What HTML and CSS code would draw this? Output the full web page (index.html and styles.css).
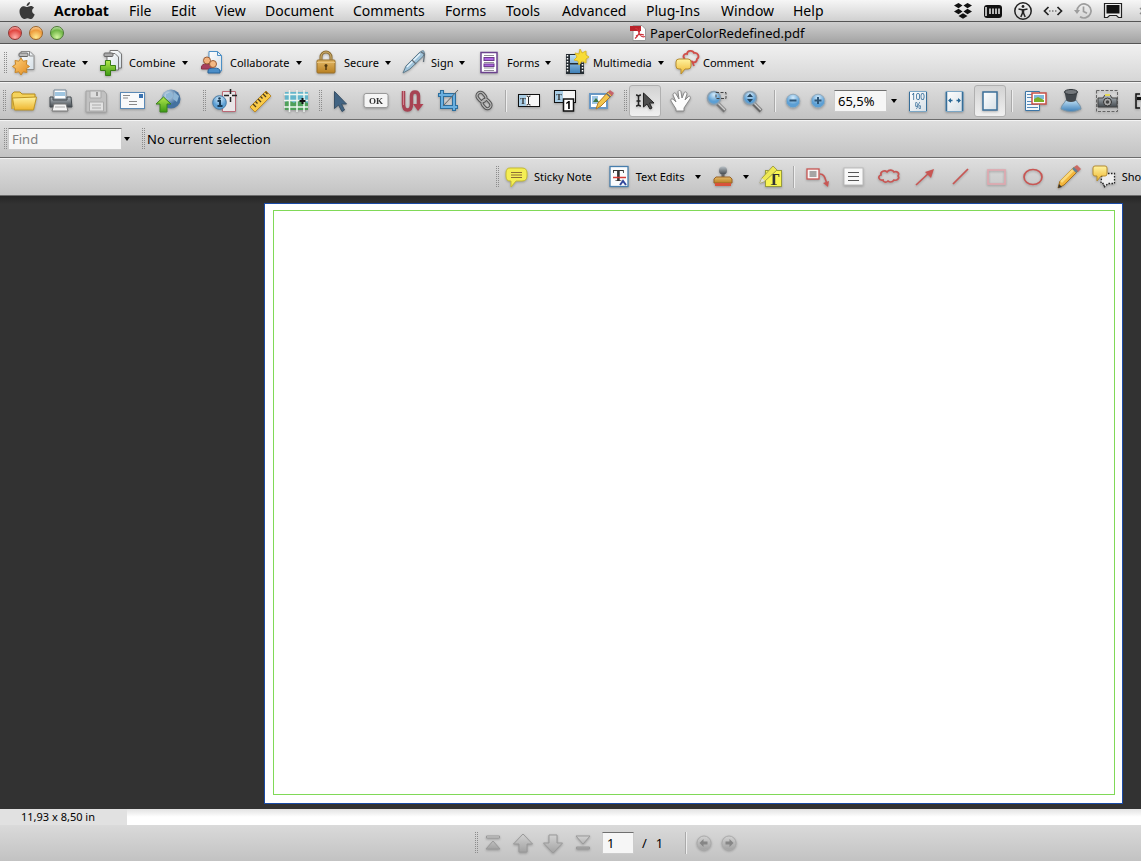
FILE: index.html
```html
<!DOCTYPE html>
<html lang="en">
<head>
<meta charset="utf-8">
<title>PaperColorRedefined.pdf</title>
<link rel="stylesheet" href="styles.css">
</head>
<body>
<svg class="defs" aria-hidden="true">
  <defs>
    <linearGradient id="gold" x2="0" y2="1"><stop offset="0" stop-color="#fff3a0"/><stop offset="1" stop-color="#eeb52e"/></linearGradient>
    <linearGradient id="orange" x2="1" y2="1"><stop offset="0" stop-color="#ffd37e"/><stop offset="1" stop-color="#e2891c"/></linearGradient>
    <linearGradient id="brass" x2="0" y2="1"><stop offset="0" stop-color="#e3b866"/><stop offset="1" stop-color="#b98022"/></linearGradient>
    <linearGradient id="green" x2="0" y2="1"><stop offset="0" stop-color="#b5ea4c"/><stop offset="1" stop-color="#3c9a14"/></linearGradient>
    <linearGradient id="blue" x2="0" y2="1"><stop offset="0" stop-color="#bfe0f5"/><stop offset="1" stop-color="#3f80b8"/></linearGradient>
    <linearGradient id="paper" x2="1" y2="1"><stop offset="0" stop-color="#ffffff"/><stop offset="1" stop-color="#d5dfe6"/></linearGradient>
    <linearGradient id="steel" x2="0" y2="1"><stop offset="0" stop-color="#b9c1c7"/><stop offset="1" stop-color="#42484d"/></linearGradient>
    <linearGradient id="grey" x2="0" y2="1"><stop offset="0" stop-color="#d2d2d2"/><stop offset="1" stop-color="#a2a2a2"/></linearGradient>
    <radialGradient id="globe" cx=".35" cy=".3"><stop offset="0" stop-color="#dcebf6"/><stop offset="1" stop-color="#44719f"/></radialGradient>
    <radialGradient id="ball" cx=".5" cy=".25"><stop offset="0" stop-color="#d4ebfb"/><stop offset="1" stop-color="#5c9fd4"/></radialGradient>
  </defs>
</svg>

<nav class="menubar" aria-label="Menu bar">
  <svg class="apple" width="16" height="18" viewBox="0 0 16 18"><path d="M11 0c.1 2-1.500 4-3.400 4C7.400 2.200 9 .4 11 0zM8.300 5c.8 0 1.900-.9 3.500-.9 1.300 0 2.500.7 3.200 1.700-2.800 1.700-2.300 5.500.7 6.600-.7 2-2.200 4.600-3.800 4.600-1.400 0-1.700-.8-3.400-.8s-2.200.8-3.400.8C3.300 17 .5 13.300.5 9.500.5 6.200 2.500 4.200 5 4.200c1.500 0 2.400.8 3.300.8z" fill="#3a3a3a"/></svg>
  <button class="menu app">Acrobat</button>
  <button class="menu">File</button>
  <button class="menu">Edit</button>
  <button class="menu">View</button>
  <button class="menu">Document</button>
  <button class="menu">Comments</button>
  <button class="menu">Forms</button>
  <button class="menu">Tools</button>
  <button class="menu">Advanced</button>
  <button class="menu">Plug-Ins</button>
  <button class="menu">Window</button>
  <button class="menu">Help</button>
  <div class="extras">
    <svg width="20" height="20" viewBox="0 0 20 20" fill="#111"><path d="M5.500 2l4 2.500-4 2.800-4.500-2.800zM14.500 2l4.500 2.500-4.500 2.800-4-2.800zM5.500 7.700l4 2.800-4 2.700L1 10.500zM14.500 7.700l4.500 2.800-4.500 2.700-4-2.700zM10 12.200l4.500 2.700-4.500 2.800-4.500-2.800z"/></svg>
    <svg width="20" height="20" viewBox="0 0 20 20"><rect x="1" y="4" width="18" height="13" rx="3" fill="#111"/><path d="M3 6v9M7 7.500v5.500M10 7.500v5.500M13 7.500v5.500M16 7.500v5.500" stroke="#e0e0e0" stroke-width="1.600"/></svg>
    <svg width="20" height="20" viewBox="0 0 20 20"><circle cx="10" cy="10" r="8.200" fill="none" stroke="#222" stroke-width="1.500"/><circle cx="10" cy="5.500" r="1.400" fill="#222"/><path d="M5.500 8l3.500.8h2l3.500-.8M9.500 9v3l-1.700 4M10.500 9v3l1.700 4M10 8.500v4" fill="none" stroke="#222" stroke-width="1.500"/></svg>
    <svg width="20" height="20" viewBox="0 0 20 20" fill="none" stroke="#222" stroke-width="1.700"><path d="M5.500 6l-4 4 4 4M14.500 6l4 4-4 4"/><path d="M6 10h8" stroke-dasharray="1.500 1.500" stroke="#777"/></svg>
    <svg width="20" height="20" viewBox="0 0 20 20" fill="none" stroke="#9d9d9d" stroke-width="1.700"><path d="M4 10a7 7 0 1 1 3 5.700M10.500 5.500v5l3.500 1.700"/><path d="M1 9h6l-3 4z" fill="#9d9d9d" stroke="none"/></svg>
    <svg width="20" height="20" viewBox="0 0 20 20"><path d="M1.500 2.500h17v14h-3l-2-2h-7l-2 2h-3z" fill="#eee" stroke="#222" stroke-width="1.200"/><path d="M3.500 4h13v8.500h-13z" fill="#111"/></svg>
    <svg width="20" height="20" viewBox="0 0 20 20"><path d="M7 7l6 6M13 7l-6 6" stroke="#888" stroke-width="1.500"/></svg>
  </div>
</nav>

<header class="titlebar">
  <div class="lights">
    <button class="light red" aria-label="Close"></button>
    <button class="light amber" aria-label="Minimize"></button>
    <button class="light lime" aria-label="Zoom"></button>
  </div>
  <h1 class="title">
    <svg width="16" height="16" viewBox="0 0 16 16"><path d="M3 .5h9l3.500 3.500v11.500H3z" fill="#fff" stroke="#999"/><path d="M0 1h11v5H0z" fill="#b8232a"/><path d="M5 3.500c4-1 3 4 5 6.500s3.500 2 5 1.500M10 3c0 5-2 8-5 10.500M6 11c3-2 5-2 8-1" fill="none" stroke="#cc3038" stroke-width="1.200"/></svg>
    PaperColorRedefined.pdf
  </h1>
</header>

<div class="bar tasks">
  <span class="grip"></span>
  <button class="task"><svg class="ic" viewBox="0 0 28 28"><path d="M9 2.500h9l4 4v14H9z" fill="url(#paper)" stroke="#8b8b8b"/><path d="M17.500 3v4h4" fill="none" stroke="#8b8b8b"/><rect x="7" y="4" width="9" height="3.500" rx="1" fill="#bbb" stroke="#666"/><path d="M9 9l2.200 3.200 3.800-.7-.7 3.800 3.200 2.200-3.200 2.200.7 3.800-3.800-.7L9 26l-2.200-3.200-3.800.7.700-3.800-3.200-2.200 3.200-2.200-.7-3.800 3.800.7z" fill="url(#orange)" stroke="#c68629"/></svg>Create<i class="caret"></i></button>
  <button class="task"><svg class="ic" viewBox="0 0 28 28"><path d="M11 1.500h8l3.500 3.500v14H11z" fill="url(#paper)" stroke="#777"/><path d="M8 4.500h8l3.500 3.500v13H8z" fill="url(#paper)" stroke="#777"/><rect x="5" y="4" width="9" height="3.500" rx="1" fill="#aaa" stroke="#666"/><path d="M6.500 11.500h5v5h5v5h-5v5h-5v-5h-5v-5h5z" fill="url(#green)" stroke="#397d14"/></svg>Combine<i class="caret"></i></button>
  <button class="task"><svg class="ic" viewBox="0 0 28 28"><path d="M9 2.500h8.500l4 4V22H9z" fill="url(#paper)" stroke="#4c8fc5"/><path d="M17.500 2.500v4h4" fill="none" stroke="#4c8fc5"/><path d="M1.500 20v-2q0-3 5.500-3t5 3v2z" fill="#a73f5e" stroke="#8c3049"/><circle cx="7" cy="11.500" r="3.500" fill="#f2b27d" stroke="#9b5c34"/><path d="M8 24v-2q0-3 6-3t6 3v2z" fill="#4b8ec8" stroke="#296398"/><circle cx="13" cy="15" r="3.500" fill="#f4b984" stroke="#9b5c34"/></svg>Collaborate<i class="caret"></i></button>
  <button class="task"><svg class="ic" viewBox="0 0 28 28"><path d="M7 12V8a5 5 0 0 1 10 0v4" fill="none" stroke="#8b6c33" stroke-width="3"/><path d="M7 12V8a5 5 0 0 1 10 0v4" fill="none" stroke="#d5b56f"/><rect x="3" y="11" width="18" height="13" rx="1" fill="url(#brass)" stroke="#99702b"/><path d="M3 13.500h18" stroke="#e9c47c"/><circle cx="12" cy="16.500" r="1.500" fill="#513910"/><path d="M12 16v5" stroke="#513910" stroke-width="1.500"/></svg>Secure<i class="caret"></i></button>
  <button class="task"><svg class="ic" viewBox="0 0 28 28"><path d="M2 24l3-7L18 4q4-3.500 5-1.500t-1 5L9 20z" fill="#9fc3da" stroke="#5f7c8d"/><path d="M6 18L19 5" stroke="#e7f5fd" stroke-width="1.500"/><path d="M11 11l4 4M20 3l3.500 2-1 8" fill="none" stroke="#64707a" stroke-width="1.300"/></svg>Sign<i class="caret"></i></button>
  <button class="task"><svg class="ic" viewBox="0 0 28 28"><rect x="4" y="3.500" width="16" height="20" fill="#fff" stroke="#6b428e" stroke-width="1.500"/><path d="M7 6.500h10M7 13.500h10M7 19h10M7 21.500h10" stroke="#938d99"/><rect x="7" y="8.500" width="10" height="3" fill="#ad66df" stroke="#6d3a8d"/><rect x="7" y="15" width="10" height="2.500" fill="#ad66df" stroke="#6d3a8d"/></svg>Forms<i class="caret"></i></button>
  <button class="task"><svg class="ic" viewBox="0 0 28 28"><rect x="3" y="5" width="18" height="20" fill="#252c32"/><path d="M4.500 6v18M19.500 6v18" stroke="#fff" stroke-width="1.500" stroke-dasharray="1.500 1.500"/><path d="M7 6h10v8H7zM7 15.500h10v8.500H7z" fill="url(#blue)"/><path d="M17 0l2 4 4-2v4l3 2-3 2v4l-4-2-3 4-1-4-4-1 3-3-2-4 4 1z" fill="#f8dc37" stroke="#d9b92a"/></svg>Multimedia<i class="caret"></i></button>
  <button class="task"><svg class="ic" viewBox="0 0 28 28"><path d="M12 10c-3-2-1-6 2-5 0-4 6-4 7-1 4-1 6 4 3 6 0 4-4 4-6 2M19 12l2 5" fill="none" stroke="#d04e49" stroke-width="1.800"/><path d="M6 10h9a3 3 0 0 1 3 3v4a3 3 0 0 1-3 3h-3l-4 5v-5H6a3 3 0 0 1-3-3v-4a3 3 0 0 1 3-3z" fill="url(#gold)" stroke="#b78d31"/></svg>Comment<i class="caret"></i></button>
</div>

<div class="bar tools">
  <span class="grip"></span>
  <div class="set">
    <button class="tool" aria-label="Open"><svg class="ic" viewBox="0 0 28 28"><path d="M2 22V7l2-2h6l2 2h13v5" fill="#f5d35b" stroke="#b58b1d"/><path d="M4.500 23L2.500 11l24-1-3 13z" fill="url(#gold)" stroke="#bd9425"/></svg></button>
    <button class="tool" aria-label="Print"><svg class="ic" viewBox="0 0 28 28"><path d="M8 3h12v9H8z" fill="#fff" stroke="#789"/><path d="M9 5h10v4H9z" fill="#9fc5e0"/><path d="M4 10h3v3h14v-3h4l1 10H4z" fill="url(#steel)" stroke="#444b50"/><path d="M8 17h12l2 7H6z" fill="#f4f4f4" stroke="#777"/><path d="M9 20h10" stroke="#aaa"/></svg></button>
    <button class="tool" aria-label="Save" disabled><svg class="ic" viewBox="0 0 28 28"><path d="M4 4h18l2.500 3v18H4z" fill="#c1c1c1" stroke="#a4a4a4"/><path d="M8 4h11v7H8z" fill="#dedede" stroke="#a9a9a9"/><path d="M15 5v4" stroke="#999" stroke-width="2"/><path d="M7.500 15h14v9h-14z" fill="#e2e2e2" stroke="#aaa"/><path d="M10 18h9M10 21h9" stroke="#aaa"/></svg></button>
    <button class="tool" aria-label="Email"><svg class="ic" viewBox="0 0 28 28"><rect x="2.500" y="5.500" width="24" height="16" fill="#f8f9fa" stroke="#5b89b5"/><rect x="21" y="7" width="4" height="4" fill="#3972b0"/><path d="M5 8.500h7M5 11h5M11 14.500h8M11 17.500h8" stroke="#888"/></svg></button>
    <button class="tool" aria-label="Upload"><svg class="ic" viewBox="0 0 28 28"><circle cx="17" cy="12" r="9.500" fill="url(#globe)"/><path d="M12 7l5-2 2 4-3 3-4-1zM20 5l5 4-2 6-4-3z" fill="#8eb6d5"/><path d="M9.500 10l7.500 7h-4v8H6v-8H2z" fill="url(#green)" stroke="#38811a"/></svg></button>
  </div>
  <span class="grip wide"></span>
  <div class="set">
    <button class="tool" aria-label="Object data"><svg class="ic" viewBox="0 0 28 28"><path d="M12.500 4.500h13v20h-13z" fill="#e8e5e7" stroke="#ba6875"/><path d="M20.500 2v5M20.500 10v5M14 8.500h5M22 8.500h5" stroke="#222" stroke-width="1.500"/><circle cx="9.500" cy="15.500" r="6.800" fill="url(#ball)" stroke="#487aa3"/><path d="M7.500 14H10v5M7.500 19h5" fill="none" stroke="#193b58" stroke-width="2"/><circle cx="9.500" cy="11.500" r="1.300" fill="#193b58"/></svg></button>
    <button class="tool" aria-label="Measure"><svg class="ic" viewBox="0 0 28 28"><path d="M4 20L20 4l5 5L9 25z" fill="#f9ca48" stroke="#bd8b29"/><path d="M7 17l3 3M9.500 14.500l2 2M12 12l3 3M14.500 9.500l2 2M17 7l3 3M19.500 5l2 2" stroke="#4c3b1b" stroke-width="1.300"/></svg></button>
    <button class="tool" aria-label="Geospatial"><svg class="ic" viewBox="0 0 28 28"><path d="M3 5h23v11H3z" fill="#64b6cb"/><path d="M3 15l4-2 5 3 4-3 10 3v7H3z" fill="#4fa05a"/><path d="M7.500 3v22M15 3v22M22 3v22M2 7.500h24M2 13.500h24M2 20h24" stroke="#edf5ef" stroke-width="1.500"/><path d="M20.500 11v6M17.500 14h6" stroke="#111" stroke-width="2"/></svg></button>
  </div>
  <span class="grip"></span>
  <div class="set">
    <button class="tool" aria-label="Select object"><svg class="ic" viewBox="0 0 28 28"><path d="M8.500 4.500v17l4-3.500 3.500 6.500 2.500-1.500-3-6h5z" fill="#426483" stroke="#385066"/></svg></button>
    <button class="tool" aria-label="Button tool"><svg class="ic" viewBox="0 0 28 28"><rect x="2" y="6.500" width="24" height="14" rx="2" fill="#f5f5f5" stroke="#999"/><text class="glyph ok" x="14" y="17">OK</text></svg></button>
    <button class="tool" aria-label="Article"><svg class="ic" viewBox="0 0 28 28"><path d="M5.500 4v13q0 6 4 6t4-6V9q0-4 3.500-4t3.500 4v9" fill="none" stroke="#a74353" stroke-width="3.500"/><path d="M5.500 4v14" stroke="#d18490"/><path d="M15 17h10.500l-5.500 7z" fill="#ae4151"/></svg></button>
    <button class="tool" aria-label="Crop"><svg class="ic" viewBox="0 0 28 28"><path d="M8 3v17h16M4 8h16v16" fill="none" stroke="#2d6e9d" stroke-width="4"/><path d="M8 4v16h15M5 8h15v15" fill="none" stroke="#69afe0" stroke-width="2"/><path d="M9 19L24 3" stroke="#666"/></svg></button>
    <button class="tool" aria-label="Link"><svg class="ic" viewBox="0 0 28 28" fill="none"><g stroke="#555" stroke-width="3.200"><rect x="8" y="5" width="7" height="10" rx="3.500" transform="rotate(-40 11.500 10)"/><rect x="13" y="12" width="7" height="10" rx="3.500" transform="rotate(-40 16.500 17)"/></g><g stroke="#b8b8b8" stroke-width="1.300"><rect x="8" y="5" width="7" height="10" rx="3.500" transform="rotate(-40 11.500 10)"/><rect x="13" y="12" width="7" height="10" rx="3.500" transform="rotate(-40 16.500 17)"/></g></svg></button>
  </div>
  <span class="rule"></span>
  <div class="set">
    <button class="tool" aria-label="Text field"><svg class="ic" viewBox="0 0 28 28"><rect x="3.500" y="7.500" width="21" height="12" fill="#f6f6f6" stroke="#111"/><path d="M4 8h7v11H4z" fill="#a9cde5"/><text class="glyph tee" x="8" y="17">T</text><path d="M11.500 9q2 0 2 1.500v6q0 1.500-2 1.500M15.500 9q-2 0-2 1.500v6q0 1.500 2 1.500" fill="none" stroke="#222"/></svg></button>
    <button class="tool" aria-label="Tab order"><svg class="ic" viewBox="0 0 28 28"><rect x="3.500" y="3.500" width="21" height="12" fill="#f6f6f6" stroke="#111"/><path d="M4 4h8v11H4z" fill="#a9cde5"/><text class="glyph tee" x="8" y="13">T</text><rect x="12.500" y="12" width="10" height="12" fill="#fff" stroke="#111" stroke-width="1.500"/><text class="glyph one" x="17.500" y="22">1</text></svg></button>
    <button class="tool" aria-label="Form wizard"><svg class="ic" viewBox="0 0 28 28"><rect x="3" y="7" width="17" height="14" fill="#fff" stroke="#6a98c4" stroke-width="2"/><rect x="5" y="9" width="6" height="8" fill="#9fc6e5"/><path d="M6 15l3-4 3 4z" fill="#3a7744"/><path d="M9 22l2-6L21 5l4 3-11 11z" fill="#f3c54c" stroke="#b17b25"/><path d="M21 5l2-2 4 3-2 3z" fill="#c6646b"/><path d="M19.500 6.500l4 3.500" stroke="#667" stroke-width="1.500"/></svg></button>
  </div>
  <span class="grip"></span>
  <div class="set">
    <button class="tool on" aria-label="Select" aria-pressed="true"><svg class="ic" viewBox="0 0 28 28"><path d="M5 8q2.500 0 2.500 2v7q0 2-2.500 2M10 8q-2.500 0-2.500 2v7q0 2 2.500 2M5.500 14h4" fill="none" stroke="#222" stroke-width="1.400"/><path d="M12.500 6v14l3.500-3 3 5 2-1-2.500-5h4.500z" fill="#4d4d4d" stroke="#222"/></svg></button>
    <button class="tool" aria-label="Hand"><svg class="ic" viewBox="0 0 28 28"><path d="M9 22l-5-8c-1-2 1-3 3-1l2 2-3-7c0-2 2-3 3-1l3 5-1-7c0-2 3-2 3 0l1 6 2-5c1-2 3-1 3 1l-2 6 3-3c2-2 3 0 2 2l-6 9v3H9z" fill="#fcfcfc" stroke="#888"/></svg></button>
    <button class="tool" aria-label="Marquee zoom"><svg class="ic" viewBox="0 0 28 28"><path d="M14 16l8 8" stroke="#777" stroke-width="4"/><path d="M15 16l7 7" stroke="#ccc" stroke-width="1.500"/><circle cx="11" cy="11" r="6.500" fill="url(#ball)" stroke="#8b9faf" stroke-width="1.500"/><path d="M13 5.500h10v6H13z" fill="none" stroke="#444" stroke-dasharray="3 1.500"/></svg></button>
    <button class="tool" aria-label="Dynamic zoom"><svg class="ic" viewBox="0 0 28 28"><path d="M14 16l8 8" stroke="#666" stroke-width="4"/><path d="M15 16l7 7" stroke="#ccc" stroke-width="1.500"/><circle cx="11" cy="11" r="6.500" fill="url(#ball)" stroke="#8b9faf" stroke-width="1.500"/><path d="M8 10l3-3.500 3 3.500zM8 12h6l-3 3.500z" fill="#23445f"/></svg></button>
  </div>
  <span class="rule"></span>
  <div class="set">
    <button class="tool small" aria-label="Zoom out"><svg class="ic" viewBox="0 0 28 28"><circle cx="14" cy="14" r="6.800" fill="url(#ball)" stroke="#92a9ba"/><path d="M10.500 13.500h7" stroke="#2d5577" stroke-width="2"/></svg></button>
    <button class="tool small" aria-label="Zoom in"><svg class="ic" viewBox="0 0 28 28"><circle cx="14" cy="14" r="6.800" fill="url(#ball)" stroke="#92a9ba"/><path d="M10.500 13.500h7M14 10v7" stroke="#2d5577" stroke-width="2"/></svg></button>
  </div>
  <input class="field zoom" aria-label="Zoom level" value="65,5%">
  <button class="drop" aria-label="Zoom presets"><i class="caret"></i></button>
  <div class="set">
    <button class="tool" aria-label="Actual size"><svg class="ic" viewBox="0 0 28 28"><path d="M5.500 4.500h17v20h-17z" fill="url(#paper)" stroke="#7ca6c4"/><path d="M5.500 24V5M22.500 24V5" stroke="#376e99"/><text class="glyph pct" x="14" y="13">100</text><text class="glyph pct" x="14" y="22">%</text></svg></button>
    <button class="tool" aria-label="Fit width"><svg class="ic" viewBox="0 0 28 28"><path d="M6 4.500h17v20H6z" fill="url(#paper)" stroke="#7ca6c4"/><path d="M6.500 5v19M22.500 5v19" stroke="#376e99" stroke-width="1.500"/><path d="M12.500 13.500H9M16.500 13.500H20" stroke="#286795" stroke-width="1.500"/><path d="M11 11l-3 2.500 3 2.500zM18 11l3 2.500-3 2.500z" fill="#286795"/></svg></button>
    <button class="tool on" aria-label="Fit page" aria-pressed="true"><svg class="ic" viewBox="0 0 28 28"><rect x="7" y="5" width="14" height="18" fill="url(#paper)" stroke="#3b6f99" stroke-width="1.500"/></svg></button>
  </div>
  <span class="rule"></span>
  <div class="set">
    <button class="tool" aria-label="Review"><svg class="ic" viewBox="0 0 28 28"><path d="M4.500 4.500h14v19h-14z" fill="#f1f6fa" stroke="#3c75a5"/><path d="M6 7.500h11M6 10.500h11M6 14.500h11M6 17.500h11M6 20.500h11" stroke="#548aba"/><rect x="11" y="6" width="14" height="11" fill="#fff" stroke="#c65148" stroke-width="1.500"/><path d="M13 8h10v4H13z" fill="#80b9db"/><path d="M13 12l4-2 6 3v2H13z" fill="#7bae28"/></svg></button>
    <button class="tool" aria-label="Loupe"><svg class="ic" viewBox="0 0 28 28"><path d="M9 13h10c1 3 5 5 5 9q-10 5-20 0c0-4 4-6 5-9z" fill="url(#blue)" stroke="#7895a9"/><path d="M7.500 5h13l-2 9q-4.500 2-9 0z" fill="#42474c"/><ellipse cx="14" cy="5" rx="6.500" ry="2.500" fill="#73777b" stroke="#33383c"/></svg></button>
    <button class="tool" aria-label="Snapshot"><svg class="ic" viewBox="0 0 28 28"><rect x="3.500" y="3.500" width="21" height="21" fill="none" stroke="#666" stroke-dasharray="3 1.500"/><path d="M5 11h5l2-3h5l2 3h5v9H5z" fill="url(#steel)" stroke="#444"/><path d="M12 8h5" stroke="#e5d857" stroke-width="2"/><circle cx="14.500" cy="15" r="4" fill="#aaa" stroke="#333"/><circle cx="14.500" cy="15" r="1.800" fill="#444"/></svg></button>
    <button class="tool" aria-label="TouchUp text"><svg class="ic" viewBox="0 0 28 28"><path d="M11 7H7v14h4" fill="none" stroke="#111" stroke-width="1.500"/><path d="M8 10h10v3h-2v6h-3v-6H8z" fill="#111"/></svg></button>
  </div>
</div>

<div class="bar find">
  <span class="grip"></span>
  <input class="field search" aria-label="Find" placeholder="Find">
  <button class="drop" aria-label="Find options"><i class="caret"></i></button>
  <span class="grip far"></span>
  <output class="selection">No current selection</output>
</div>

<div class="bar markup">
  <span class="grip"></span>
  <button class="task"><svg class="ic" viewBox="0 0 28 28"><path d="M8 5h12q5 0 5 5v3q0 5-5 5h-6l-5 6v-6H8q-4 0-4-5v-3q0-5 4-5z" fill="#f4ee54" stroke="#c5ba31"/><path d="M9 9.500h11M9 12h11M9 14.500h11" stroke="#8d6d35"/></svg>Sticky Note</button>
  <button class="task edits"><svg class="ic" viewBox="0 0 28 28"><rect x="6" y="3.500" width="18" height="20" fill="#fbfcfd" stroke="#477ead" stroke-width="1.300"/><text class="glyph bigtee" x="14.500" y="18">T</text><path d="M9 14.500h13" stroke="#d53a35" stroke-width="1.500"/><path d="M16 22l3-4 3 4" fill="none" stroke="#34499c" stroke-width="2"/></svg>Text Edits<i class="caret"></i></button>
  <button class="task stamp" aria-label="Stamp"><svg class="ic" viewBox="0 0 28 28"><circle cx="14" cy="7.500" r="4" fill="url(#steel)"/><path d="M12.500 11h3v4h-3z" fill="#666"/><path d="M7 14h14l2 2v4H5v-4z" fill="url(#brass)" stroke="#9b6526"/><path d="M6 20h16v3H6z" fill="#d9523b"/></svg><i class="caret"></i></button>
  <button class="tool" aria-label="Highlight"><svg class="ic" viewBox="0 0 28 28"><rect x="8.500" y="7.500" width="16" height="16" fill="#f9f551" stroke="#979a3d"/><text class="glyph bigtee" x="17" y="22">T</text><path d="M3 20l2-5L16 3l4 4L8 18z" fill="#eee954" stroke="#a5a048"/><path d="M3 20l2-5 3 3z" fill="#ddd"/></svg></button>
  <span class="rule"></span>
  <div class="set">
    <button class="tool" aria-label="Callout"><svg class="ic" viewBox="0 0 28 28"><rect x="4" y="6" width="12" height="10" fill="#f9f5f5" stroke="#c85653" stroke-width="1.300"/><path d="M6.500 9h7M6.500 11h7M6.500 13h7" stroke="#555"/><path d="M17 11c5 0 5 5 7 10" fill="none" stroke="#c85653" stroke-width="1.600"/><path d="M20 20l6-2-1 6z" fill="#c85653"/></svg></button>
    <button class="tool" aria-label="Text box"><svg class="ic" viewBox="0 0 28 28"><rect x="5" y="5" width="19" height="17" fill="#f8f8f8" stroke="#bbb"/><path d="M9 9.500h11M9 13.500h11M9 17.500h11" stroke="#555"/></svg></button>
    <button class="tool" aria-label="Cloud"><svg class="ic" viewBox="0 0 28 28"><path d="M8 17c-4 1-6-4-2-5-1-4 4-5 6-3 2-3 6-2 7 0 3-1 6 1 4 4 2 2-1 5-4 4-2 3-5 2-6 1-2 2-5 1-5-1z" fill="none" stroke="#c85653" stroke-width="1.700"/></svg></button>
    <button class="tool" aria-label="Arrow"><svg class="ic" viewBox="0 0 28 28"><path d="M5 22L19 9" stroke="#c85653" stroke-width="1.700"/><path d="M14 9l9-3-3 9z" fill="#c85653"/></svg></button>
    <button class="tool" aria-label="Line"><svg class="ic" viewBox="0 0 28 28"><path d="M6 21L21 6" stroke="#c85653" stroke-width="1.700"/></svg></button>
    <button class="tool" aria-label="Rectangle"><svg class="ic" viewBox="0 0 28 28"><rect x="5" y="7" width="17" height="14" fill="none" stroke="#dfa9b0" stroke-width="1.700"/></svg></button>
    <button class="tool" aria-label="Oval"><svg class="ic" viewBox="0 0 28 28"><ellipse cx="14" cy="14" rx="9" ry="7.500" fill="none" stroke="#c85653" stroke-width="1.700"/></svg></button>
    <button class="tool" aria-label="Pencil"><svg class="ic" viewBox="0 0 28 28"><path d="M3 25l2-7L19 4l4 4L9 22z" fill="#f3b63c" stroke="#a7721e"/><path d="M5 18L19 4l2 2L7 20z" fill="#fada7c"/><path d="M19 4l3-2 4 4-3 3z" fill="#cc6963"/><path d="M18 5l4 4" stroke="#647e94" stroke-width="2.500"/><path d="M3 25l1-4 3 3z" fill="#333"/></svg></button>
  </div>
  <button class="task"><svg class="ic" viewBox="0 0 28 28"><path d="M12 10.500h12.500v10H18l-4 4v-4h-3z" fill="#eee" stroke="#222" stroke-dasharray="1.500 1.500" stroke-width="1.300"/><path d="M5 3h10q2 0 2 2v6q0 2-2 2h-4l-4 5v-5H5q-2 0-2-2V5q0-2 2-2z" fill="url(#gold)" stroke="#b78d31"/></svg>Show</button>
</div>

<main class="canvas">
  <div class="sheet"><div class="trim"></div></div>
</main>

<div class="status"><span class="size">11,93 x 8,50 in</span></div>

<footer class="pager">
  <span class="grip"></span>
  <div class="set">
    <button class="tool step" aria-label="First page" disabled><svg class="ic" viewBox="0 0 28 28"><path d="M7.500 7h13v2h-13zM7 20l7-8 7 8z" fill="url(#grey)" stroke="#999"/></svg></button>
    <button class="tool step" aria-label="Previous page" disabled><svg class="ic" viewBox="0 0 28 28"><path d="M14 5l9.500 10H18v8h-8v-8H4.500z" fill="url(#grey)" stroke="#999"/></svg></button>
    <button class="tool step" aria-label="Next page" disabled><svg class="ic" viewBox="0 0 28 28"><path d="M14 24l9.500-10H18V6h-8v8H4.500z" fill="url(#grey)" stroke="#999"/></svg></button>
    <button class="tool step" aria-label="Last page" disabled><svg class="ic" viewBox="0 0 28 28"><path d="M7 7h14l-7 8zM7.500 18h13v2h-13z" fill="url(#grey)" stroke="#999"/></svg></button>
  </div>
  <input class="field page" aria-label="Page" value="1">
  <span class="total"><span>/</span><span>1</span></span>
  <span class="rule"></span>
  <div class="set">
    <button class="tool small" aria-label="Previous view" disabled><svg class="ic" viewBox="0 0 28 28"><circle cx="14" cy="14" r="7" fill="url(#grey)" stroke="#aaa"/><path d="M9.500 14l4-4v2.500h4v3h-4V18z" fill="#868686"/></svg></button>
    <button class="tool small" aria-label="Next view" disabled><svg class="ic" viewBox="0 0 28 28"><circle cx="14" cy="14" r="7" fill="url(#grey)" stroke="#aaa"/><path d="M18.500 14l-4-4v2.500h-4v3h4V18z" fill="#868686"/></svg></button>
  </div>
</footer>
</body>
</html>
```

FILE: styles.css
```css
* { box-sizing: border-box; }

body {
  margin: 0;
  height: 100vh;
  display: flex;
  flex-direction: column;
  overflow: hidden;
  font-family: "Lucida Grande", "Noto Sans", sans-serif;
  font-size: 13px;
  color: #000;
  background: #323232;
}

.defs { position: absolute; width: 0; height: 0; }

button {
  font: inherit;
  color: inherit;
  background: none;
  border: 0;
  padding: 0;
  white-space: nowrap;
  text-align: left;
}

.ic {
  width: 28px;
  height: 28px;
  flex: none;
  display: block;
  overflow: visible;
  filter: drop-shadow(0 1px 1px rgba(0, 0, 0, 0.25));
}

/* Menu bar */
.menubar {
  flex: none;
  height: 22px;
  padding-left: 19px;
  display: grid;
  grid-template-columns: 35px 75px 42px 44px 50px 88px 92px 61px 56px 84px 75px 72px 52px 1fr;
  align-items: center;
  font-size: 14px;
  line-height: 20px;
  background: linear-gradient(#f6f6f6, #d0d0d0);
  border-bottom: 1px solid #555;
}
.app { font-weight: bold; }
.extras { display: flex; justify-content: flex-end; gap: 10px; margin-right: -12px; }
.extras svg { flex: none; }

/* Title bar */
.titlebar {
  flex: none;
  height: 22px;
  display: grid;
  grid-template-columns: 630px 1fr;
  align-items: center;
  background: linear-gradient(#cfcfcf, #a3a3a3);
  border-bottom: 1px solid #555;
}
.lights { display: flex; gap: 7px; padding-left: 8px; }
.light { width: 14px; height: 14px; border-radius: 50%; border: 1px solid #666; }
.red { background: radial-gradient(circle at 50% 85%, #ffb0a8, #e0443e 60%, #fbe0dd); border-color: #8e3734; }
.amber { background: radial-gradient(circle at 50% 85%, #ffe98e, #ee9b3c 60%, #fdebcf); border-color: #9b6529; }
.lime { background: radial-gradient(circle at 50% 85%, #d3f5a0, #6fb545 60%, #e2f3d5); border-color: #4b7a33; }
.title {
  margin: 0;
  display: flex;
  align-items: center;
  gap: 4px;
  font-size: 13px;
  font-weight: normal;
  line-height: 20px;
}

/* Toolbars */
.bar {
  flex: none;
  height: 38px;
  display: flex;
  align-items: center;
  border-top: 1px solid #f4f4f4;
  border-bottom: 1px solid #6c6c6c;
  background: linear-gradient(#dedede, #c3c3c3);
}
.grip {
  flex: none;
  width: 4px;
  height: 22px;
  margin-left: 3px;
  background: conic-gradient(#8c8c8c 25%, transparent 0) 0 0 / 2px 2px;
}
.rule {
  flex: none;
  width: 2px;
  height: 22px;
  margin: 0 4px 0 3px;
  border-left: 1px solid #aaa;
  border-right: 1px solid #eee;
}
.caret {
  flex: none;
  width: 0;
  height: 0;
  border: 3px solid transparent;
  border-top: 4px solid #000;
  border-bottom: 0;
}
.set { display: flex; flex: none; }
.tool {
  flex: none;
  width: 36px;
  height: 32px;
  display: flex;
  align-items: center;
  justify-content: center;
}
.small { width: 25px; }
.step { width: 30px; }
.on {
  width: 32px;
  margin: 0 2px;
  background: linear-gradient(#d2d2d2, #f0f0f0);
  border: 1px solid #b0b0b0;
  border-radius: 3px;
}
.task {
  flex: none;
  display: flex;
  align-items: center;
  font-size: 11px;
  line-height: 16px;
}
.task .caret { margin-left: 6px; }

.field {
  flex: none;
  height: 22px;
  padding: 0 3px;
  font: inherit;
  color: inherit;
  background: #f6f6f6;
  border: 1px solid #ccc;
  border-top: 1px solid #6f6f6f;
  border-radius: 0;
  outline: 0;
}
.drop { flex: none; width: 13px; height: 22px; display: flex; align-items: center; justify-content: center; }

.tasks {
  display: grid;
  grid-template-columns: 12px 87px 101px 114px 87px 76px 86px 110px 1fr;
  background: linear-gradient(#f0f0f0, #d6d6d6);
}
.tasks .ic { margin-right: 2px; }

.tools .grip { margin-left: 4px; }
.tools .grip:first-child { margin-left: 2px; }
.tools .wide { margin-left: 16px; }
.zoom { width: 53px; margin-left: 4px; }

.search { width: 114px; margin-left: 1px; }
.search::placeholder { color: #808080; opacity: 1; }
.find .drop { width: 9px; }
.find .far { margin-left: 10px; }
.selection { margin-left: 2px; }

.markup { padding-left: 492px; }
.markup .task { gap: 4px; margin-left: 3px; }
.markup .task .caret { margin-left: 6px; }
.markup .edits { margin-left: 12px; }
.markup .stamp { gap: 0; margin: 0 4px 0 8px; }
.markup .rule { margin-left: 4px; }

/* Document area */
.canvas {
  flex: 1;
  min-height: 0;
  display: flex;
  padding: 7px 18px 5px 264px;
  background: linear-gradient(#262626, #323232 8px);
}
.sheet {
  flex: 1;
  display: flex;
  padding: 6px 7px 8px 8px;
  background: #fff;
  border: 1px solid #1a4ba6;
}
.trim { flex: 1; border: 1px solid #80d957; }

.status {
  flex: none;
  height: 16px;
  display: flex;
  background: linear-gradient(#e2e2e2, #fff 8px);
}
.size {
  width: 127px;
  padding-left: 21px;
  font-size: 11px;
  line-height: 16px;
  background: #e1e1e1;
}

.pager {
  flex: none;
  height: 36px;
  display: flex;
  align-items: center;
  padding-left: 471px;
  background: linear-gradient(#dadada, #c2c2c2);
}
.page { width: 32px; margin-left: 4px; padding-left: 4px; }
.total { width: 48px; padding-left: 8px; display: flex; gap: 9px; }

/* Lettering inside icons */
.glyph { text-anchor: middle; font-family: "Liberation Serif", serif; font-weight: bold; fill: #333; }
.ok { font-size: 9px; }
.tee { font-size: 9px; }
.bigtee { font-size: 17px; }
.one { font-family: "Noto Sans", sans-serif; font-size: 11px; fill: #000; }
.pct { font-family: "Noto Sans", sans-serif; font-size: 8px; font-weight: normal; fill: #1e5c8d; }
```
